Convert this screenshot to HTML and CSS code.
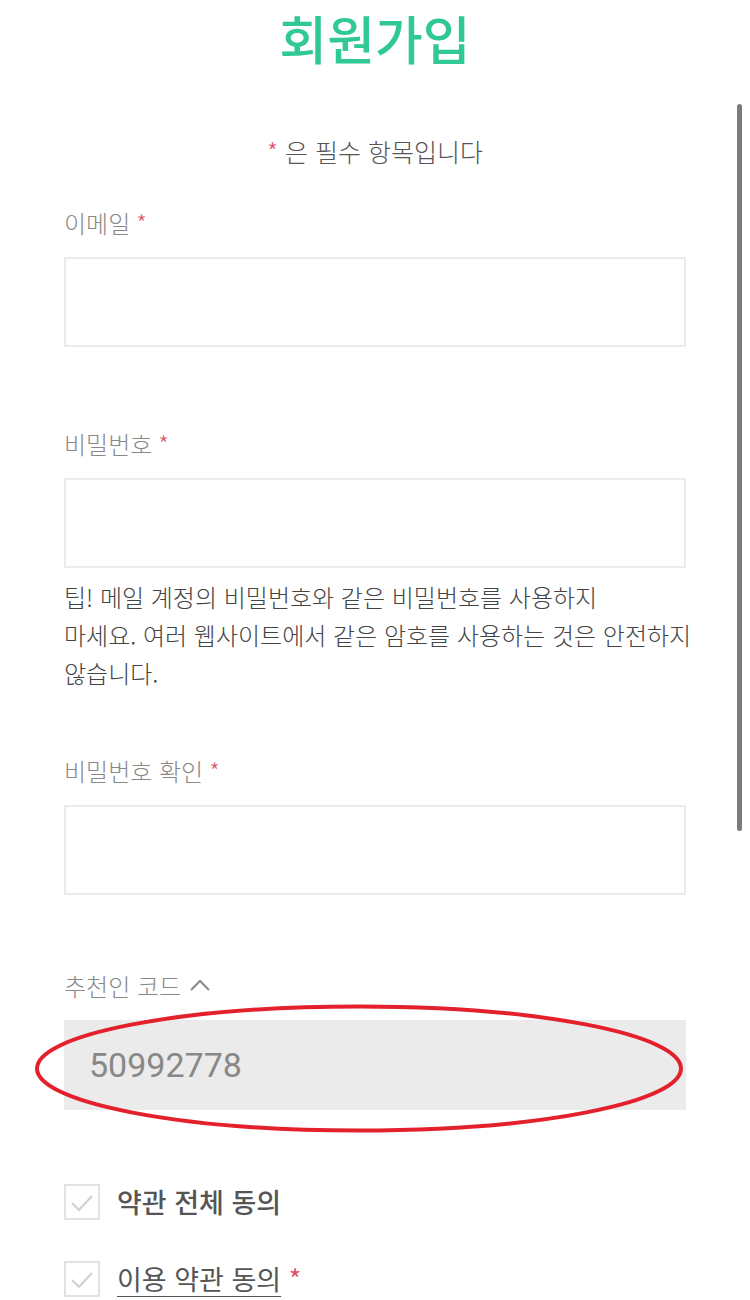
FILE: index.html
```html
<!DOCTYPE html>
<html lang="ko">
<head>
    <meta charset="UTF-8">
    <meta name="viewport" content="width=device-width, initial-scale=1.0">
    <title>회원가입</title>
    <link rel="stylesheet" href="styles.css">
</head>
<body>
    <div class="page">
        <h1 class="title">회원가입</h1>
        <p class="required-note"><span class="star">*</span> 은 필수 항목입니다</p>

        <form class="signup">
            <div class="field">
                <label class="label">이메일 <span class="star">*</span></label>
                <input class="input" type="email">
            </div>

            <div class="field field-tip">
                <label class="label">비밀번호 <span class="star">*</span></label>
                <input class="input" type="password">
                <p class="tip">팁! 메일 계정의 비밀번호와 같은 비밀번호를 사용하지<br>마세요. 여러 웹사이트에서 같은 암호를 사용하는 것은 안전하지<br>않습니다.</p>
            </div>

            <div class="field field-tight">
                <label class="label">비밀번호 확인 <span class="star">*</span></label>
                <input class="input" type="password">
            </div>

            <div class="field field-tight">
                <label class="label">추천인 코드
                    <svg class="caret" width="22" height="14" viewBox="0 0 22 14"><polyline points="2,12 11,3 20,12" fill="none" stroke="#888" stroke-width="2"/></svg>
                </label>
                <div class="referral">
                    <input class="input input-filled" type="text" value="50992778" readonly>
                    <svg class="mark" width="652" height="131" viewBox="0 0 652 131">
                        <ellipse cx="326" cy="65.5" rx="322" ry="62" fill="none" stroke="#e3202b" stroke-width="4"/>
                    </svg>
                </div>
            </div>

            <div class="agree">
                <label class="check-row">
                    <span class="box"><svg width="32" height="32" viewBox="0 0 32 32"><polyline points="6,17 13,24 26,10" fill="none" stroke="#cfcfcf" stroke-width="2"/></svg></span>
                    <span class="check-text strong">약관 전체 동의</span>
                </label>
                <label class="check-row">
                    <span class="box"><svg width="32" height="32" viewBox="0 0 32 32"><polyline points="6,17 13,24 26,10" fill="none" stroke="#cfcfcf" stroke-width="2"/></svg></span>
                    <span class="check-text"><a class="link">이용 약관 동의</a> <span class="star">*</span></span>
                </label>
            </div>
        </form>
    </div>
    <div class="scrollbar"></div>
</body>
</html>
```

FILE: styles.css
```css
body {
    margin: 0;
    background: #fff;
    font-family: "Noto Sans CJK KR", "Noto Sans", sans-serif;
    color: #555;
}
.page {
    width: 750px;
    overflow: hidden;
}
.title {
    margin: 0;
    text-align: center;
    font-size: 52px;
    line-height: 76px;
    font-weight: 500;
    color: #30c897;
}
.required-note {
    margin: 58px 0 0;
    text-align: center;
    font-size: 25px;
    line-height: 34px;
    font-weight: 300;
    color: #555;
}
.star {
    color: #e0526a;
}
.signup {
    padding: 38px 64px 0;
}
.field {
    margin-bottom: 80px;
}
.field-tip {
    margin-bottom: 62px;
}
.field-tight {
    margin-bottom: 74px;
}
.field-tight + .agree {
    margin-top: 1px;
}
.label {
    display: flex;
    align-items: center;
    gap: 6px;
    font-size: 24px;
    line-height: 34px;
    font-weight: 300;
    color: #888;
    margin-bottom: 17px;
}
.caret {
    margin-left: 2px;
    margin-top: -2px;
}
.input {
    display: block;
    box-sizing: border-box;
    width: 622px;
    height: 90px;
    border: 2px solid #ebebeb;
    background: #fff;
    padding: 0 23px;
    font-family: Roboto, "Noto Sans CJK KR", sans-serif;
    font-size: 34px;
    color: #888;
    outline: none;
}
.input-filled {
    background: #ebebeb;
    border-color: #ebebeb;
}
.referral {
    position: relative;
}
.mark {
    position: absolute;
    left: -31px;
    top: -17px;
    pointer-events: none;
}
.tip {
    margin: 10px 0 0;
    font-size: 24px;
    line-height: 38px;
    font-weight: 300;
    color: #444;
    word-break: keep-all;
    white-space: nowrap;
}
.agree {
    display: flex;
    flex-direction: column;
    gap: 41px;
}
.check-row {
    display: flex;
    align-items: center;
    gap: 17px;
}
.box {
    display: flex;
    align-items: center;
    justify-content: center;
    width: 36px;
    height: 36px;
    box-sizing: border-box;
    border: 2px solid #e2e2e2;
}
.check-text {
    font-size: 27px;
    line-height: 36px;
    color: #555;
}
.strong {
    font-weight: 500;
}
.link {
    text-decoration: underline;
    text-underline-offset: 6px;
    text-decoration-thickness: 2px;
}
.scrollbar {
    position: fixed;
    left: 737px;
    top: 104px;
    width: 5px;
    height: 727px;
    border-radius: 3px;
    background: #7b7b7b;
}
```
